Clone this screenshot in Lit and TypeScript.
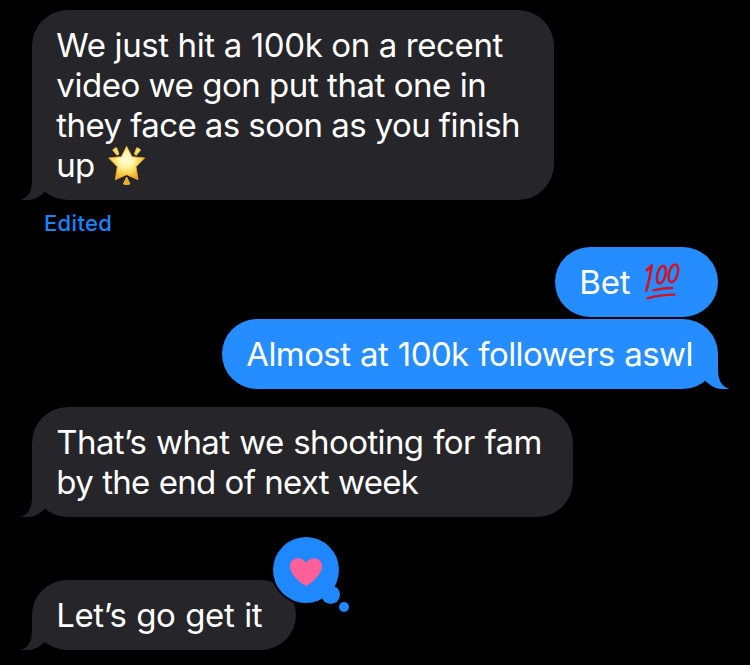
import { LitElement, html, svg, css, nothing } from "lit";
import { customElement, property } from "lit/decorators.js";
import { classMap } from "lit/directives/class-map.js";
import { styleMap } from "lit/directives/style-map.js";

interface Line {
  text: string;
  tracking: number;
  wordGap?: number;
  emoji?: "star" | "hundred";
}

interface Message {
  sent: boolean;
  width: number;
  gap: number;
  tail: boolean;
  lines: Line[];
  status?: string;
  loved?: boolean;
}

const messages: Message[] = [
  {
    sent: false, width: 522, gap: 0, tail: true, status: "Edited",
    lines: [
      { text: "We just hit a 100k on a recent", tracking: -0.38 },
      { text: "video we gon put that one in", tracking: -0.46 },
      { text: "they face as soon as you finish", tracking: -0.58 },
      { text: "up", tracking: -0.7, emoji: "star" },
    ],
  },
  { sent: true, width: 163, gap: 47, tail: false, lines: [{ text: "Bet", tracking: -0.2, emoji: "hundred" }] },
  {
    sent: true, width: 496, gap: 2, tail: true,
    lines: [{ text: "Almost at 100k followers aswl", tracking: -0.6, wordGap: 1 }],
  },
  {
    sent: false, width: 541, gap: 18, tail: true,
    lines: [
      { text: "That’s what we shooting for fam", tracking: -0.6, wordGap: 1 },
      { text: "by the end of next week", tracking: -0.72, wordGap: 0.6 },
    ],
  },
  {
    sent: false, width: 264, gap: 63, tail: true, loved: true,
    lines: [{ text: "Let’s go get it", tracking: -0.42, wordGap: 1 }],
  },
];

const star = html`<svg class="star" width="40" height="42" viewBox="290 40 120 126" aria-label="glowing star">
  <defs>
    <radialGradient id="glow" cx="347" cy="86" r="66" gradientUnits="userSpaceOnUse">
      <stop offset="0" stop-color="#fffde4" />
      <stop offset=".35" stop-color="#fff5a4" />
      <stop offset=".65" stop-color="#fcd152" />
      <stop offset="1" stop-color="#e99a18" />
    </radialGradient>
    <linearGradient id="ray" x1="0" y1="0" x2="0" y2="1">
      <stop offset="0" stop-color="#fae46a" />
      <stop offset="1" stop-color="#eda72c" />
    </linearGradient>
  </defs>
  <g stroke-linejoin="round" stroke-width="2.5">
    <path fill="url(#ray)" stroke="#eebb42" d="M307 58 Q311 52 319 51 L326 70 L320 74Z M391 58 Q387 52 379 51 L372 70 L378 74Z M349 139 L359 160 Q349 164 339 160Z" />
    <path fill="url(#glow)" stroke="#f3b030" d="M349 47 L365 78 L403 82 L377 108 L383 147 L349 132 L315 147 L321 108 L295 82 L333 78Z" />
  </g>
</svg>`;

const hundred = html`<svg class="hundred" width="38" height="40" viewBox="314 82 114 120" aria-label="hundred points">
  <g fill="none" stroke="#d9101c" stroke-linecap="round" stroke-linejoin="round">
    <path stroke-width="8" d="M322 106 Q331 101 337 92 Q332 132 321 168" />
    <ellipse cx="366" cy="120" rx="12" ry="27" stroke-width="7.5" transform="rotate(15 366 120)" />
    <ellipse cx="402" cy="116" rx="13" ry="27" stroke-width="7.5" transform="rotate(15 402 116)" />
    <path stroke-width="7" d="M343 167 Q370 160 399 160 M324 191 Q362 180 405 180" />
  </g>
</svg>`;

const tailShape = svg`<path d="M-.5 36 C8 33 11 27 11 16 V0 H41 L23.7 28 C18 33 13 36 7 36Z" />`;

@customElement("chat-bubble")
class ChatBubble extends LitElement {
  @property({ attribute: false }) message!: Message;

  static styles = css`
    :host { display: flex; flex-direction: column; }
    .bubble {
      position: relative;
      isolation: isolate;
      box-sizing: border-box;
      padding: 15px 0 15px 24.3px;
      border-radius: 36px;
      background: #26252a;
      color: #fff;
      font: 400 33px/40px Inter, "Noto Sans", sans-serif;
      font-feature-settings: "calt" 0;
    }
    .sent { align-self: flex-end; background: #258dff; }
    .line { display: flex; align-items: center; height: 40px; white-space: pre; }
    .tail { position: absolute; z-index: -1; left: -11px; bottom: 0; fill: #26252a; overflow: visible; }
    .sent .tail { left: auto; right: -11px; transform: scaleX(-1); fill: #258dff; }
    .star { margin-left: 12px; overflow: visible; }
    .hundred { margin-left: 14px; overflow: visible; }
    .status {
      margin: 9px 0 1px 12px;
      height: 28px;
      font: 500 22px/28px Inter, "Noto Sans", sans-serif;
      letter-spacing: 0.35px;
      color: #1a84ff;
    }
    .reaction { position: absolute; left: 236px; top: -48px; }
  `;

  render() {
    const m = this.message;
    return html`
      <div class=${classMap({ bubble: true, sent: m.sent })} style=${styleMap({ width: `${m.width}px` })}>
        ${m.tail ? html`<svg class="tail" width="42" height="36" viewBox="0 0 42 36">${tailShape}</svg>` : nothing}
        ${m.lines.map(
          (l) => html`<div class="line"><span style=${styleMap({
            letterSpacing: `${l.tracking}px`,
            wordSpacing: `${l.wordGap ?? 0}px`,
          })}>${l.text}</span>${
            l.emoji === "star" ? star : l.emoji === "hundred" ? hundred : nothing
          }</div>`,
        )}
        ${m.loved
          ? html`<svg class="reaction" width="88" height="86" viewBox="0 0 88 86" aria-label="loved">
              <circle cx="38" cy="38" r="35" fill="#000" />
              <g fill="#1f88ff">
                <circle cx="38" cy="38" r="33" />
                <circle cx="62.7" cy="62.7" r="9.3" />
                <circle cx="76" cy="75" r="5" />
              </g>
              <path fill="#ff6099" d="M38 54 C35 53 22 43 22 34.5 C22 29.5 25.5 26.3 30 26.3 C33.5 26.3 36.5 28 38 31 C39.5 28 42.5 26.3 46 26.3 C50.5 26.3 54 29.5 54 34.5 C54 43 41 53 38 54Z" />
            </svg>`
          : nothing}
      </div>
      ${m.status ? html`<div class="status">${m.status}</div>` : nothing}
    `;
  }
}

@customElement("app-root")
class AppRoot extends LitElement {
  static styles = css`
    :host {
      display: block;
      box-sizing: border-box;
      height: 665px;
      padding: 10px 32px 0;
      overflow: hidden;
      background: #000;
    }
  `;

  render() {
    return messages.map((m, i) => {
      const above = i > 0 && messages[i - 1].status ? 38 : 0;
      return html`<chat-bubble .message=${m} style=${styleMap({ marginTop: `${m.gap - above}px` })}></chat-bubble>`;
    });
  }
}
